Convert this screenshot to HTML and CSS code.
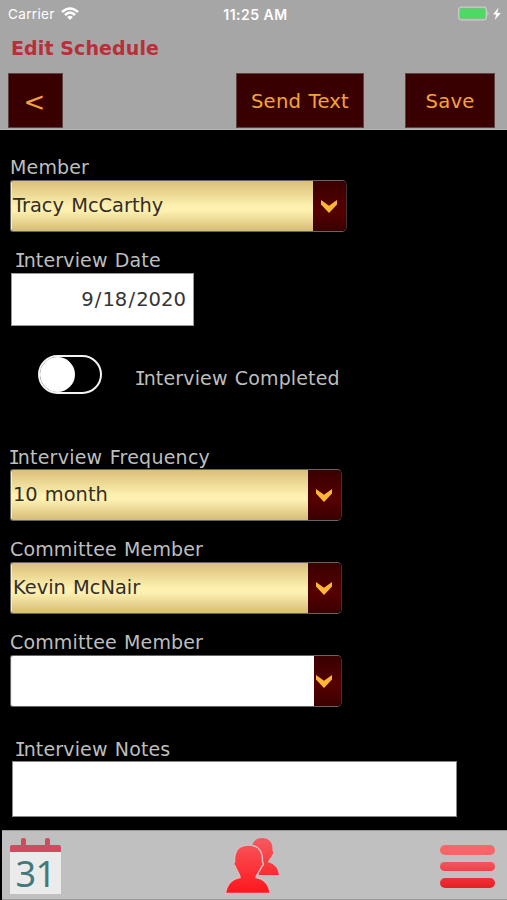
FILE: index.html
```html
<!DOCTYPE html>
<html lang="en">
<head>
<meta charset="utf-8">
<title>Edit Schedule</title>
<link rel="stylesheet" href="styles.css">
</head>
<body>
<div class="screen">
  <header class="header">
    <div class="status">
      <div class="carrier"><span>Carrier</span>
        <svg width="18" height="14" viewBox="0 0 18 14" fill="none" stroke="#fff" stroke-width="2.5"><path d="M1 5Q9-2 17 5M4 8Q9 3.2 14 8"/><path d="M6.2 10Q9 7.6 11.8 10L9 13Z" fill="#fff" stroke="none"/></svg>
      </div>
      <div class="clock">11:25 AM</div>
      <div class="power">
        <svg width="44" height="16" viewBox="0 0 44 16"><rect x=".7" y="1.2" width="27.6" height="12.6" rx="2.5" fill="none" stroke="#ccc" stroke-width="1.2"/><rect x="2" y="2.5" width="25" height="10" rx="1" fill="#4cd964"/><path d="M29.5 5q2 2.5 0 5z" fill="#ccc"/><path d="M40.5 1.5L35 8.5h3.2l-1.4 5.5 6-7h-3.6z" fill="#fff"/></svg>
      </div>
    </div>
    <h1 class="title">Edit Schedule</h1>
    <div class="actions">
      <button class="btn back">&lt;</button>
      <button class="btn send">Send Text</button>
      <button class="btn save">Save</button>
    </div>
  </header>
  <main class="form">
    <label class="label member-label">Member</label>
    <div class="select wide"><div class="value">Tracy McCarthy</div><div class="arrow"><svg width="16" height="13" viewBox="0 0 16 13"><path d="M0 0L8 5.7 16 0V4.5L8 13 0 4.5Z"/></svg></div></div>
    <label class="label date-label"><span class="cap-i">I</span>nterview Date</label>
    <div class="date">9<i>/</i>18<i>/</i>2020</div>
    <div class="toggle-row"><div class="toggle"><div class="knob"></div></div><span class="label toggle-label"><span class="cap-i">I</span>nterview Completed</span></div>
    <label class="label freq-label"><span class="cap-i">I</span>nterview Frequency</label>
    <div class="select"><div class="value">10 month</div><div class="arrow"><svg width="16" height="13" viewBox="0 0 16 13"><path d="M0 0L8 5.7 16 0V4.5L8 13 0 4.5Z"/></svg></div></div>
    <label class="label committee-label">Committee Member</label>
    <div class="select"><div class="value">Kevin McNair</div><div class="arrow"><svg width="16" height="13" viewBox="0 0 16 13"><path d="M0 0L8 5.7 16 0V4.5L8 13 0 4.5Z"/></svg></div></div>
    <label class="label committee-label">Committee Member</label>
    <div class="select empty"><div class="value"></div><div class="arrow"><svg width="16" height="13" viewBox="0 0 16 13"><path d="M0 0L8 5.7 16 0V4.5L8 13 0 4.5Z"/></svg></div></div>
    <label class="label notes-label"><span class="cap-i">I</span>nterview Notes</label>
    <div class="notes"></div>
  </main>
  <nav class="tabs">
    <div class="calendar"><div class="rings"><b></b><b></b></div><div class="bar"></div><div class="day">31</div></div>
    <svg class="people" width="56" height="58" viewBox="0 0 56 58">
      <defs><linearGradient id="red" x1="0" y1="0" x2="0" y2="58" gradientUnits="userSpaceOnUse"><stop offset="0" stop-color="#f65b60"/><stop offset="1" stop-color="#ff141a"/></linearGradient></defs>
      <path fill="url(#red)" d="M27 11C27 4 32 1 37 1C44 1 47.5 5 47.5 12V14Q49 16 47 18C46 21 43 23 43 25Q53 28 54 38H34Z"/>
      <path fill="url(#red)" stroke="#d3bfc0" stroke-width="1.5" d="M9.5 23C9.5 12 16 8 23.5 8C32 8 37.5 13 37.5 23V25Q39.5 28 37 29C35.500 34 31 37 31 40.500Q44 43 45 56.500H.5Q2 43 15 40.500C15 37 11.500 34 10 29Q7.500 27 9.500 25Z"/>
      <path fill="none" stroke="#c0c0c0" stroke-width="1.3" d="M0 57.500H46"/>
    </svg>
    <div class="menu"><i></i><i></i><i></i></div>
  </nav>
</div>
</body>
</html>
```
FILE: styles.css
```css
* { box-sizing: border-box; }
body { margin: 0; background: #000; }
.screen { width: 507px; height: 900px; display: flex; flex-direction: column; background: #000; font-family: "DejaVu Sans", sans-serif; font-size: 19.6px; overflow: hidden; }
.header { height: 130px; background: #a6a6a6; border-bottom: 1px solid #b6b6b6; }
.status { height: 28px; display: grid; grid-template-columns: 1fr 80px 1fr; align-items: center; padding: 0 4px 0 8px; color: #fff; font-family: Inter, sans-serif; font-size: 13.5px; }
.carrier { display: flex; align-items: center; gap: 6px; letter-spacing: .35px; }
.clock { text-align: center; font-weight: 600; font-size: 14px; white-space: nowrap; letter-spacing: .5px; }
.power { display: flex; justify-content: flex-end; }
.power svg { margin-right: 1px; }
.title { margin: 6px 0 0 11px; height: 27px; line-height: 28px; font-size: 19px; letter-spacing: .1px; color: #b92e39; }
.actions { display: flex; margin: 12px 0 0 8px; }
.btn { height: 55px; padding: 2px 0 0; border: 1px solid #5f4242; background: #380000; color: #f6a23c; font: 19.6px "DejaVu Sans", sans-serif; letter-spacing: .2px; word-spacing: 1px; white-space: nowrap; }
.back { width: 55px; font-size: 26px; padding: 2px 2px 0 0; }
.send { width: 128px; margin-left: 173px; }
.save { width: 90px; margin-left: 41px; }
.form { flex: 1; padding-left: 10px; }
.label { display: block; height: 24px; line-height: 22px; font-size: 19px; color: #bebebe; letter-spacing: .15px; word-spacing: 1px; }
.cap-i { font-family: "DejaVu Sans Mono", monospace; letter-spacing: -2.4px; margin-left: -1.4px; }
.member-label { margin-top: 26px; }
.select { width: 332px; height: 52px; display: flex; border: 1px solid #666; border-right-color: #3a3434; border-radius: 3px 5px 5px 3px; overflow: hidden; }
.wide { width: 337px; }
.value { flex: 1; padding-left: 1px; line-height: 50px; font-size: 19.4px; color: #332d28; border-left: 1px solid #eee; background: linear-gradient(#dabf78, #fdf0b0 50%, #fdf0b0 60%, #d6bb75); word-spacing: 1px; }
.arrow { width: 33px; padding-right: 2px; display: flex; align-items: center; justify-content: center; background: linear-gradient(#3a0000, #560000 60%, #3a0000); }
.arrow svg { fill: #fdb735; margin-top: 1px; }
.empty .value { background: #fff; }
.empty .arrow { width: 27px; padding-right: 8px; }
.date-label { margin: 17px 0 0 6px; }
.date { width: 183px; height: 53px; margin-left: 1px; padding-right: 7px; border: 1px solid #999; background: #fff; color: #353535; text-align: right; line-height: 52px; }
.date i { font-style: normal; margin: 0 1.1px; }
.toggle-row { display: flex; height: 39px; margin: 29px 0 0 28px; }
.toggle { width: 64px; height: 39px; border: 2.5px solid #f4f4f4; border-radius: 20px; }
.knob { width: 35px; height: 35px; border-radius: 50%; background: #fff; }
.toggle-label { margin: 12px 0 0 34px; }
.freq-label { margin-top: 51px; line-height: 24px; letter-spacing: .25px; }
.committee-label { margin-top: 17px; line-height: 23px; }
.notes-label { margin: 30px 0 0 6px; line-height: 24px; }
.notes { width: 445px; height: 56px; margin-left: 2px; border: 1px solid #888; background: #fff; }
.tabs { height: 70px; flex: none; margin-left: 2px; padding: 0 12px 0 8px; border: solid #999; border-width: 1px 0; background: #c0c0c0; display: flex; justify-content: space-between; }
.calendar { width: 51px; height: 56px; margin-top: 7px; display: flex; flex-direction: column; }
.rings { height: 7px; display: flex; justify-content: space-between; padding: 0 11px; }
.rings b { width: 5px; background: #d24a60; border-radius: 2px 2px 0 0; }
.bar { height: 7px; background: #d24a60; border-radius: 2px 2px 0 0; }
.day { height: 42px; background: #ebebeb; color: #427a79; font: 36px/43px "Noto Sans", sans-serif; text-align: center; letter-spacing: -.5px; }
.people { margin: 6px 0 0 4px; }
.menu { width: 55px; margin-top: 14px; display: flex; flex-direction: column; gap: 7px; }
.menu i { height: 9.6px; border-radius: 5px; background: linear-gradient(#fa676b, #f76265); }
.menu i:nth-child(2) { background: linear-gradient(#f9555c, #ee4249); }
.menu i:nth-child(3) { background: linear-gradient(#ef3037, #e62024); }
```
